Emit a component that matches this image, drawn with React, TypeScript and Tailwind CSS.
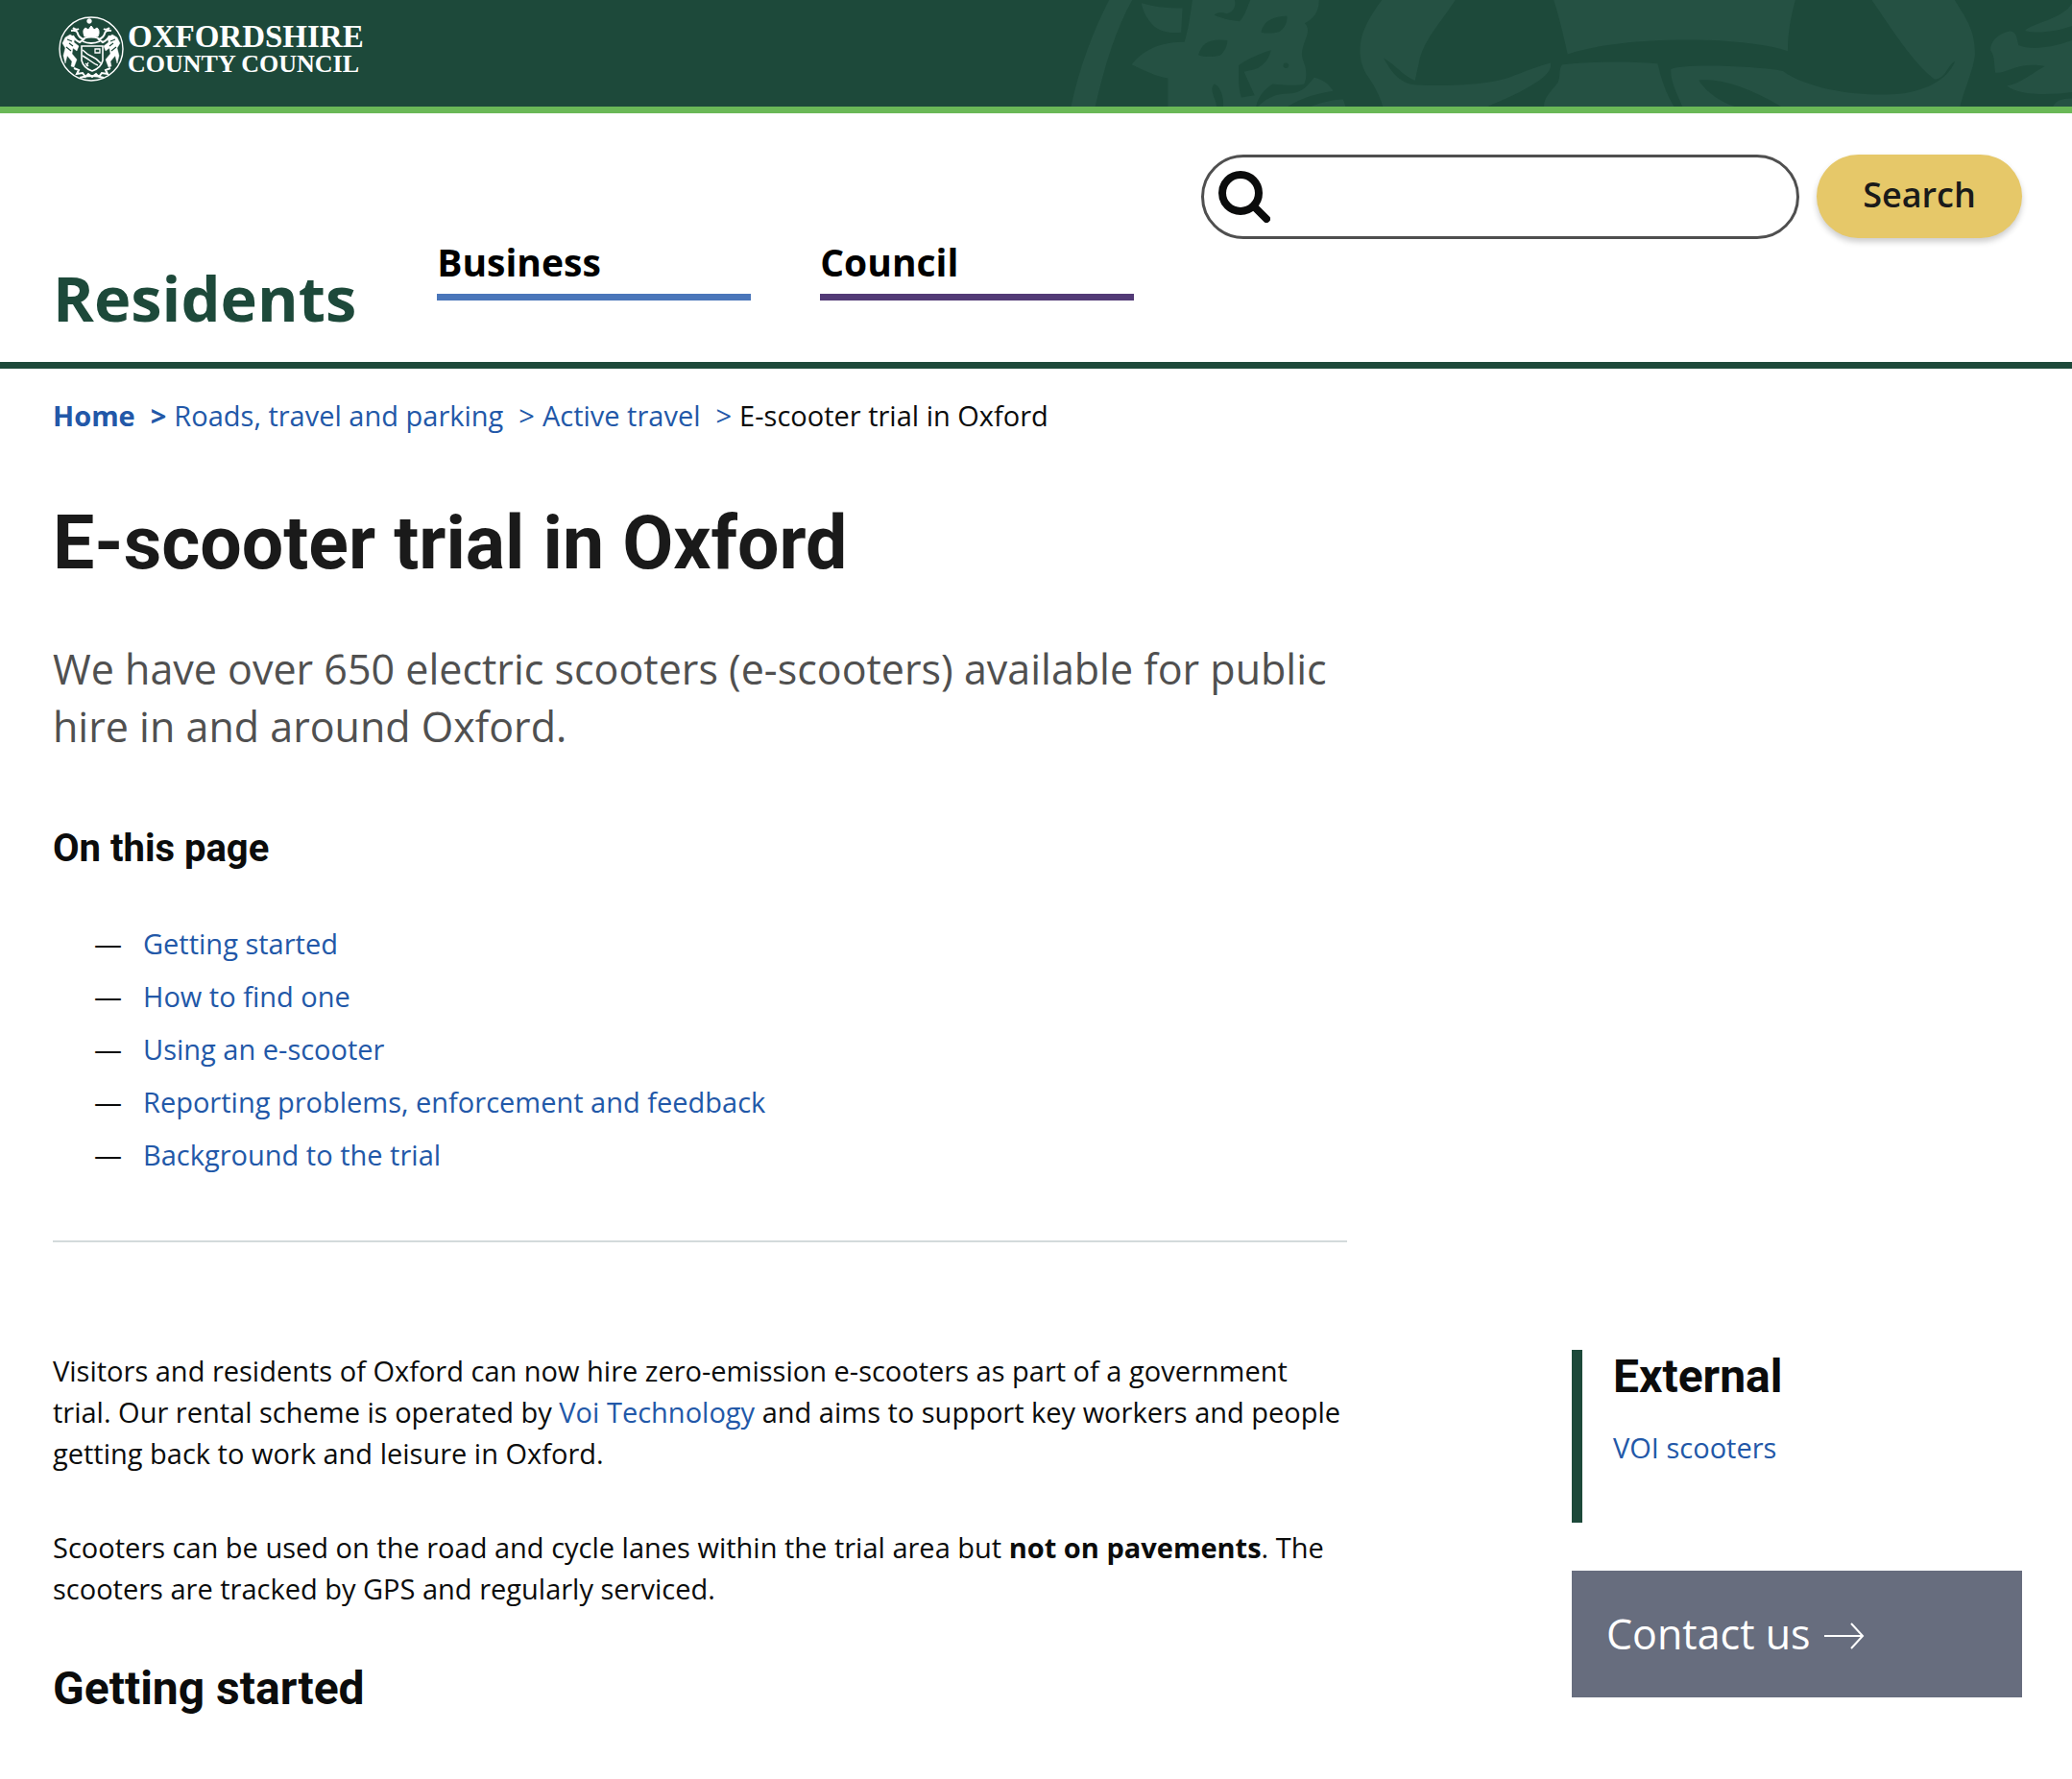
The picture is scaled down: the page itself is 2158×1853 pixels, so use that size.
import React from "react";

const contents = [
  { id: "getting-started", label: "Getting started" },
  { id: "find-one", label: "How to find one" },
  { id: "using", label: "Using an e-scooter" },
  { id: "reporting", label: "Reporting problems, enforcement and feedback" },
  { id: "background", label: "Background to the trial" },
];

const sections = [
  { label: "Business", className: "border-[#4a76ba]" },
  { label: "Council", className: "border-[#523a76]" },
];

const Crest: React.FC = () => (
  <svg viewBox="0 0 72 72" className="size-[72px] shrink-0" fill="none" stroke="#fff" aria-hidden="true">
    <circle cx="36" cy="36" r="33" strokeWidth="1.4" />
    {/* crown and ox */}
    <path d="M29 23c-2-5-1-8 1-9l3 2 3-4 3 4 3-2c2 1 3 5 1 9z" fill="#fff" />
    <circle cx="34" cy="7" r="2.4" fill="#fff" strokeWidth="0.6" />
    <path d="M28 25q8-3 16 0M27 28q9 4 18 0" strokeWidth="1.8" />
    {/* mantling */}
    <path d="M17 14q3 3 6 1M15 17q6-1 7 3t6 6l-4 3q-6-3-7-7M55 14q-3 3-6 1M57 17q-6-1-7 3t-6 6l4 3q6-3 7-7" strokeWidth="2" />
    {/* shield */}
    <path d="M26 33h22v15q-2 8-11 11-9-3-11-11z" strokeWidth="1.6" />
    <path d="M27 37q5 5 10 7t9 7M27 43q5 3 9 6t7 4" strokeWidth="1.5" />
    <path d="M40 36h5v4h-5zM30 51l3 3M33 50l-2 4" strokeWidth="1.3" />
    {/* supporters */}
    <path d="M9 24l5-3 5 3-1 5 5 4-2 5-4-3-1 6 5 6-3 8-3-1 1-5-5-6-2 8-2-8 2-8-3-5z" fill="#fff" strokeWidth="0.4" />
    <path d="M63 24l-5-3-5 3 1 5-5 4 2 5 4-3 1 6-5 6 3 8 3-1-1-5 5-6 2 8 2-8-2-8 3-5z" fill="#fff" strokeWidth="0.4" />
    <path d="M11 26l5 2M13 30l4 3M10 34l5 4M61 26l-5 2M59 30l-4 3M62 34l-5 4" stroke="#1d493a" strokeWidth="1.2" />
    {/* motto */}
    <path d="M18 56l5 2-2 4 6-1 3 4 3-3 4 3 4-3 3 3 3-4 6 1-2-4 5-2M24 66q12-4 25 0" strokeWidth="2" />
  </svg>
);

const HeaderArt: React.FC = () => (
  <svg viewBox="0 0 1058 111" className="absolute top-0 right-0 h-[111px] w-[1058px]" fill="#255143" aria-hidden="true">
    <g transform="scale(0.3444 0.3364)">
      <path d="M160 0H230C180 90 145 210 118 330H45C70 210 110 100 160 0Z" />
      <path d="M258 10C300 22 340 27 382 25L378 100C350 104 315 98 295 80C275 60 262 35 258 10Z" />
      <path d="M412 0H540C545 20 535 38 515 42C500 36 485 38 478 46C505 60 530 64 555 66C572 48 578 20 587 0H795C795 40 775 60 752 72C765 85 762 100 755 120C745 150 738 165 748 190C760 220 757 245 750 260C720 268 680 262 655 260C630 275 610 300 605 330H505C508 300 495 265 478 260C460 280 485 305 485 330H338V242C310 240 270 220 228 200C270 145 330 130 388 130C400 90 405 50 412 0Z" />
      <path d="M780 240C805 245 825 260 838 282C790 290 750 300 700 330H610C640 300 670 290 700 290C735 290 755 275 780 240ZM770 330C800 318 840 308 868 308L875 330Z" />
      <g fill="#1d493a">
        <path d="M430 170C440 130 470 118 518 125C518 140 510 160 495 172C470 178 445 176 430 170Z" />
        <path d="M620 100C625 65 660 50 698 50C700 70 690 88 675 98C655 104 635 104 620 100Z" />
        <path d="M650 155C645 175 635 200 600 215L568 222L600 295L560 302C550 270 552 240 552 202C580 180 620 165 650 155Z" />
        <circle cx="695" cy="203" r="8" />
      </g>
      <path d="M985 0H1207C1170 60 1115 120 1100 180L1085 250C1050 235 1025 200 990 180C1010 215 1035 260 1090 263C1200 268 1300 262 1370 240C1420 220 1460 205 1495 195C1500 215 1480 235 1460 250C1400 290 1350 310 1305 330H988C980 300 965 270 945 240C915 200 915 150 925 110C940 65 960 35 985 0Z" />
    </g>
    <g transform="translate(520 0) scale(0.3432 0.3364)">
      <path d="M-5 0H728C715 50 705 100 705 158C560 110 200 110 37 168C25 110 10 50 -5 0Z" />
      <path d="M22 200C110 190 220 190 310 197C320 240 335 290 360 330H-35C-35 300 -10 280 8 255C15 240 10 205 22 200Z" />
      <path d="M350 215C380 195 620 205 690 220C780 285 950 300 1050 290C1120 280 1190 250 1212 190C1190 200 1185 245 1150 245C1090 200 1020 90 960 0H1212C1240 50 1275 90 1273 170C1270 210 1240 280 1228 330H685C620 290 520 240 435 248C460 290 510 320 545 330H385C370 290 350 260 350 215Z" />
      <path d="M1568 10C1540 60 1450 70 1425 95C1460 105 1520 98 1568 80Z" />
      <path d="M1568 125C1500 150 1440 155 1405 140C1400 110 1395 95 1375 97C1340 105 1320 130 1320 155C1335 175 1330 200 1335 225C1370 230 1400 190 1485 205C1440 230 1410 260 1370 265C1400 295 1500 295 1568 285Z" />
      <path d="M1510 330Q1520 305 1568 305V330Z" />
    </g>
  </svg>
);

const SiteHeader: React.FC = () => (
  <header className="relative h-[118px] overflow-hidden border-b-[7px] border-[#6ab857] bg-[#1d493a]">
    <HeaderArt />
    <a href="#home" className="relative flex w-fit pt-[15px] pl-[59px] text-white">
      <Crest />
      <span className="flex flex-col pt-2 pl-0.5 font-['Liberation_Serif',serif] font-bold whitespace-nowrap">
        <span className="text-[33px] leading-[30px]">OXFORDSHIRE</span>
        <span className="text-[26px] leading-[28px]">COUNTY COUNCIL</span>
      </span>
    </a>
  </header>
);

const SearchForm: React.FC = () => (
  <form className="flex gap-[18px]" onSubmit={(e) => e.preventDefault()}>
    <label className="flex h-[88px] w-[623px] items-center rounded-full border-[3px] border-[#4f4f4f] pl-[15px]">
      <svg viewBox="0 0 54 54" className="size-[54px] shrink-0" fill="none" stroke="#0b0c0c" aria-hidden="true">
        <circle cx="23" cy="23" r="19" strokeWidth="8" />
        <path d="M38 38l12 12" strokeWidth="8" strokeLinecap="round" />
      </svg>
      <input
        type="search"
        aria-label="Search this site"
        className="h-full min-w-0 flex-1 px-4 text-[29px] outline-none"
      />
    </label>
    <button
      type="submit"
      className="h-[87px] w-[214px] rounded-full bg-[#e6c869] pb-1 text-[36px] font-semibold text-[#1a1a1a] shadow-[0_4px_6px_rgba(0,0,0,0.2)]"
    >
      Search
    </button>
  </form>
);

const App: React.FC = () => {
  return (
    <div className="min-h-screen bg-white font-['Open_Sans',sans-serif] text-[29px] leading-[43px] text-[#0b0c0c]">
      <SiteHeader />

      <div className="flex justify-between border-b-[7px] border-[#1d493a] pt-[43px] pr-[52px] pb-[27px] pl-[55px]">
        <nav className="flex items-start gap-[72px] pt-[82px]" aria-label="Sections">
          <a href="#residents" className="mt-[27px] mr-3 text-[65px] leading-[80px] font-bold text-[#1d493a]">
            Residents
          </a>
          {sections.map((section) => (
            <a
              key={section.label}
              href="#section"
              className={`w-[327px] border-b-[7px] pt-[2px] pb-[5px] text-[39px] leading-[56px] font-bold text-black ${section.className}`}
            >
              {section.label}
            </a>
          ))}
        </nav>
        <SearchForm />
      </div>

      <div className="pr-[52px] pb-16 pl-[55px]">
        <nav className="pt-[27px]" aria-label="Breadcrumb">
          <ol className="flex text-[#2258a8]">
            <li className="font-bold">
              <a href="#home">Home</a>
              <span className="pr-2 pl-4">&gt;</span>
            </li>
            <li>
              <a href="#roads">Roads, travel and parking</a>
              <span className="pr-2 pl-4">&gt;</span>
            </li>
            <li>
              <a href="#active">Active travel</a>
              <span className="pr-2 pl-4">&gt;</span>
            </li>
            <li className="text-[#0b0c0c]">E-scooter trial in Oxford</li>
          </ol>
        </nav>

        <main>
          <h1 className="mt-[67px] font-[Roboto,sans-serif] text-[77px] leading-[90px] font-bold text-[#1a1a1a]">
            E-scooter trial in Oxford
          </h1>
          <p className="mt-14 max-w-[1350px] text-[43px] leading-[60px] text-[#505050]">
            We have over 650 electric scooters (e-scooters) available for public hire in and around Oxford.
          </p>

          <h2 className="mt-[73px] font-[Roboto,sans-serif] text-[40px] leading-[48px] font-bold">On this page</h2>
          <ul className="mt-[47px] pl-[43px] leading-[55px]">
            {contents.map((item) => (
              <li key={item.id} className="flex">
                <span className="w-[51px]">—</span>
                <a href={`#${item.id}`} className="text-[#2258a8]">
                  {item.label}
                </a>
              </li>
            ))}
          </ul>
          <hr className="mt-[62px] max-w-[1348px] border-t-2 border-[#d3dadb]" />

          <div className="mt-[112px] flex justify-between">
            <article className="max-w-[1350px]">
              <p>
                Visitors and residents of Oxford can now hire zero-emission e-scooters as part of a government trial.
                Our rental scheme is operated by{" "}
                <a href="#voi" className="text-[#2258a8]">
                  Voi Technology
                </a>{" "}
                and aims to support key workers and people getting back to work and leisure in Oxford.
              </p>
              <p className="mt-[55px]">
                Scooters can be used on the road and cycle lanes within the trial area but{" "}
                <strong>not on pavements</strong>. The scooters are tracked by GPS and regularly serviced.
              </p>
              <h2
                id="getting-started"
                className="mt-[54px] font-[Roboto,sans-serif] text-[48px] leading-[58px] font-bold"
              >
                Getting started
              </h2>
            </article>

            <aside className="w-[469px]">
              <section className="h-[180px] border-l-[11px] border-[#1d493a] pl-8">
                <h2 className="font-[Roboto,sans-serif] text-[48px] leading-[56px] font-bold">External</h2>
                <a href="#voi" className="mt-6 block text-[#2258a8]">
                  VOI scooters
                </a>
              </section>
              <a
                href="#contact"
                className="mt-[50px] flex h-[132px] items-center gap-[14px] bg-[#676d7e] pl-9 text-[43px] leading-[60px] text-white"
              >
                Contact us
                <svg viewBox="0 0 42 28" className="mt-1 h-7 w-[42px]" fill="none" stroke="currentColor" strokeWidth="2" aria-hidden="true">
                  <path d="M0 14h40M28 1l12 13-12 13" />
                </svg>
              </a>
            </aside>
          </div>
        </main>
      </div>
    </div>
  );
};

export default App;
